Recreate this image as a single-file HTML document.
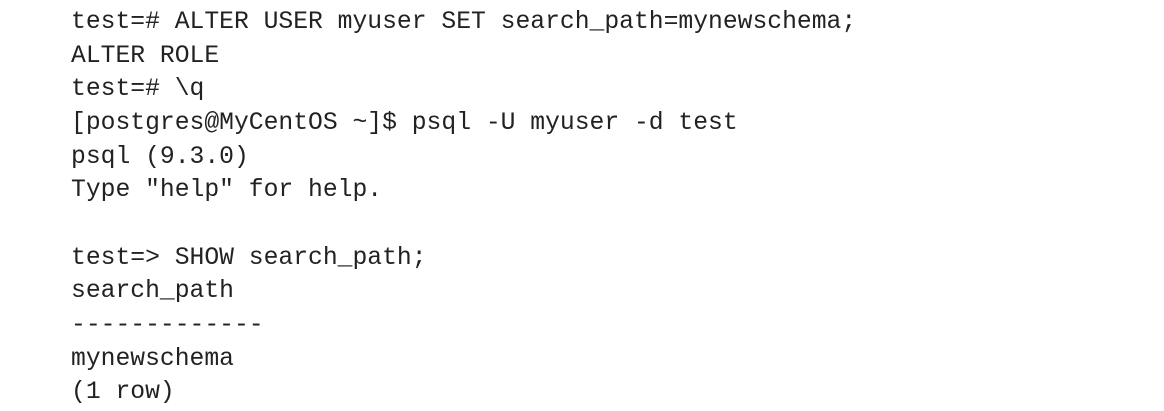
<!DOCTYPE html>
<html>
<head>
<meta charset="utf-8">
<style>
html,body{margin:0;padding:0;background:#fff;width:1164px;height:411px;overflow:hidden;}
pre{margin:0;position:absolute;left:71px;top:6px;font-family:"Liberation Mono",monospace;font-size:24.7px;line-height:33.65px;color:#222;}
</style>
</head>
<body>
<pre>test=# ALTER USER myuser SET search_path=mynewschema;
ALTER ROLE
test=# \q
[postgres@MyCentOS ~]$ psql -U myuser -d test
psql (9.3.0)
Type "help" for help.

test=&gt; SHOW search_path;
search_path
-------------
mynewschema
(1 row)</pre>
</body>
</html>
